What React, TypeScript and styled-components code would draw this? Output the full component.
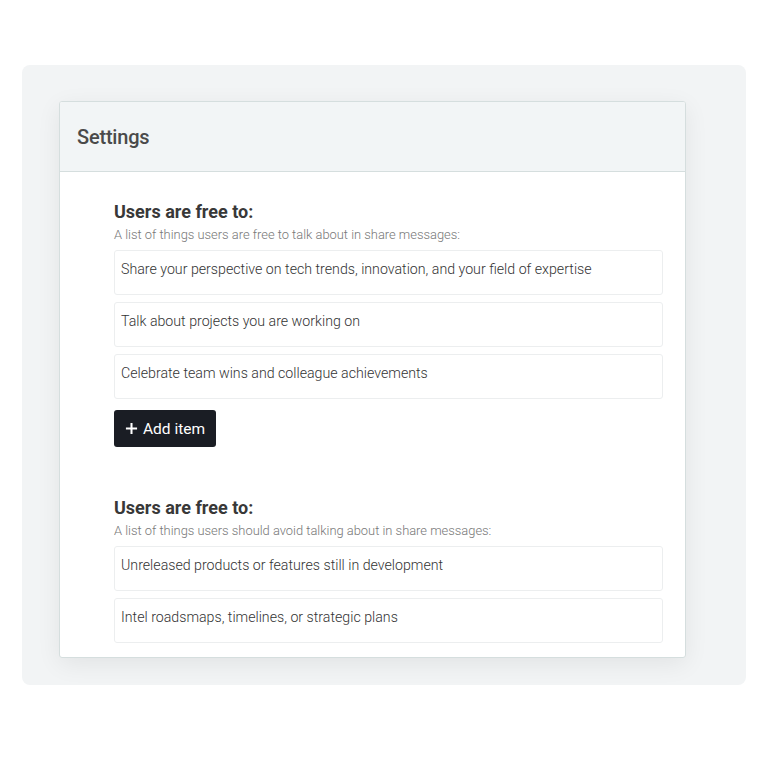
import styled, { createGlobalStyle } from "styled-components";

const GlobalStyle = createGlobalStyle`
  html, body {
    margin: 0;
    padding: 0;
    background: #ffffff;
    font-family: Roboto, "Liberation Sans", sans-serif;
  }
`;

interface Section {
  title: string;
  hint: string;
  items: string[];
  canAdd: boolean;
}

const SECTIONS: Section[] = [
  {
    title: "Users are free to:",
    hint: "A list of things users are free to talk about in share messages:",
    items: [
      "Share your perspective on tech trends, innovation, and your field of expertise",
      "Talk about projects you are working on",
      "Celebrate team wins and colleague achievements",
    ],
    canAdd: true,
  },
  {
    title: "Users are free to:",
    hint: "A list of things users should avoid talking about in share messages:",
    items: [
      "Unreleased products or features still in development",
      "Intel roadsmaps, timelines, or strategic plans",
    ],
    canAdd: false,
  },
];

function App() {
  return (
    <>
      <GlobalStyle />
      <Page>
        <Backdrop>
          <Card>
            <CardHeader>
              <HeaderTitle>Settings</HeaderTitle>
            </CardHeader>
            <CardBody>
              {SECTIONS.map((section, i) => (
                <SectionBlock key={i}>
                  <SectionTitle>{section.title}</SectionTitle>
                  <SectionHint>{section.hint}</SectionHint>
                  <ItemList>
                    {section.items.map((item) => (
                      <Item key={item}>{item}</Item>
                    ))}
                  </ItemList>
                  {section.canAdd && (
                    <AddButton>
                      <svg width="13" height="13" viewBox="0 0 14 14">
                        <path
                          d="M7 1v12M1 7h12"
                          stroke="#fff"
                          strokeWidth="2.2"
                          strokeLinecap="butt"
                        />
                      </svg>
                      Add item
                    </AddButton>
                  )}
                </SectionBlock>
              ))}
            </CardBody>
          </Card>
        </Backdrop>
      </Page>
    </>
  );
}

export default App;

/* ---------------- styled-components ---------------- */

const Page = styled.div`
  width: 768px;
  height: 768px;
  padding: 65px 22px 0;
  box-sizing: border-box;
`;

const Backdrop = styled.div`
  height: 620px;
  background: #f2f4f5;
  border-radius: 8px;
  padding: 36px 60px 0 37px;
  box-sizing: border-box;
`;

const Card = styled.div`
  background: #fff;
  border: 1px solid #d5dede;
  border-radius: 3px;
  box-shadow: 0 6px 24px rgba(0, 0, 0, 0.07);
  overflow: hidden;
`;

const CardHeader = styled.div`
  height: 69px;
  background: #f2f5f6;
  border-bottom: 1px solid #d5dede;
  display: flex;
  align-items: center;
  padding: 0 17px;
`;

const HeaderTitle = styled.h1`
  margin: 0;
  font-size: 20px;
  font-weight: 500;
  color: #4a4a4a;
  letter-spacing: -0.2px;
`;

const CardBody = styled.div`
  padding: 29px 22px 14px 54px;
  display: flex;
  flex-direction: column;
  gap: 50px;
`;

const SectionBlock = styled.div`
  display: flex;
  flex-direction: column;
`;

const SectionTitle = styled.h2`
  margin: 0;
  font-size: 18px;
  font-weight: 700;
  color: #383838;
  line-height: 22px;
`;

const SectionHint = styled.p`
  margin: 4px 0 7px;
  font-size: 12.9px;
  font-weight: 300;
  color: #777;
  line-height: 16px;
`;

const ItemList = styled.div`
  display: flex;
  flex-direction: column;
  gap: 7px;
`;

const Item = styled.div`
  height: 45px;
  box-sizing: border-box;
  border: 1px solid #eceeef;
  border-radius: 3px;
  padding: 9px 6px 0;
  font-size: 14.2px;
  font-weight: 300;
  color: #333;
  line-height: 19px;
`;

const AddButton = styled.button`
  align-self: flex-start;
  margin-top: 11px;
  height: 37px;
  padding: 0 11px 0 11px;
  display: flex;
  align-items: center;
  gap: 5px;
  background: #1a1d24;
  color: #fff;
  border: none;
  border-radius: 3px;
  font-family: Roboto, "Liberation Sans", sans-serif;
  font-size: 15.5px;
  font-weight: 400;
  cursor: pointer;
`;
